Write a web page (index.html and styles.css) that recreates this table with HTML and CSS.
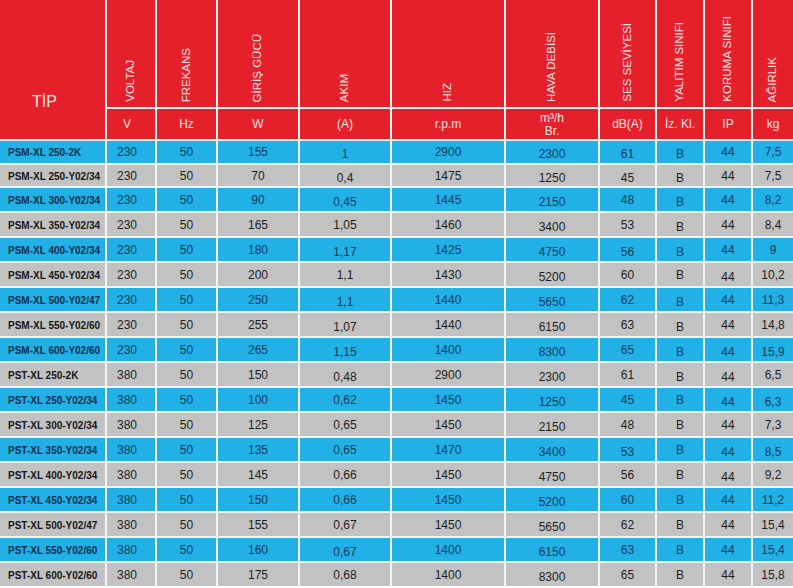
FILE: index.html
```html
<!DOCTYPE html>
<html lang="tr">
<head>
<meta charset="utf-8">
<title>PSM-XL / PST-XL</title>
<link rel="stylesheet" href="styles.css">
</head>
<body>
<div class="table">
  <div class="h tip">TİP</div>
  <div class="h v"><span>VOLTAJ</span></div>
  <div class="h v"><span>FREKANS</span></div>
  <div class="h v"><span>GİRİŞ GÜCÜ</span></div>
  <div class="h v"><span>AKIM</span></div>
  <div class="h v"><span>HIZ</span></div>
  <div class="h v"><span>HAVA DEBİSİ</span></div>
  <div class="h v"><span>SES SEVİYESİ</span></div>
  <div class="h v"><span>YALITIM SINIFI</span></div>
  <div class="h v"><span>KORUMA SINIFI</span></div>
  <div class="h v"><span>AĞIRLIK</span></div>

  <div class="h u volt">V</div>
  <div class="h u">Hz</div>
  <div class="h u">W</div>
  <div class="h u">(A)</div>
  <div class="h u">r.p.m</div>
  <div class="h u two">m³/h<br>Br.</div>
  <div class="h u">dB(A)</div>
  <div class="h u">İz. Kl.</div>
  <div class="h u">IP</div>
  <div class="h u">kg</div>

  <div class="row blue"><div class="name">PSM-XL 250-2K</div><div class="volt">230</div><div>50</div><div>155</div><div class="low">1</div><div>2900</div><div class="low">2300</div><div class="low">61</div><div class="low">B</div><div>44</div><div>7,5</div></div>
  <div class="row gray"><div class="name">PSM-XL 250-Y02/34</div><div class="volt">230</div><div>50</div><div>70</div><div class="low">0,4</div><div>1475</div><div class="low">1250</div><div class="low">45</div><div class="low">B</div><div>44</div><div>7,5</div></div>
  <div class="row blue"><div class="name">PSM-XL 300-Y02/34</div><div class="volt">230</div><div>50</div><div>90</div><div class="low">0,45</div><div>1445</div><div class="low">2150</div><div>48</div><div class="low">B</div><div>44</div><div>8,2</div></div>
  <div class="row gray"><div class="name">PSM-XL 350-Y02/34</div><div class="volt">230</div><div>50</div><div>165</div><div>1,05</div><div>1460</div><div class="low">3400</div><div>53</div><div class="low">B</div><div>44</div><div>8,4</div></div>
  <div class="row blue"><div class="name">PSM-XL 400-Y02/34</div><div class="volt">230</div><div>50</div><div>180</div><div class="low">1,17</div><div>1425</div><div class="low">4750</div><div class="low">56</div><div class="low">B</div><div>44</div><div>9</div></div>
  <div class="row gray"><div class="name">PSM-XL 450-Y02/34</div><div class="volt">230</div><div>50</div><div>200</div><div>1,1</div><div>1430</div><div class="low">5200</div><div>60</div><div>B</div><div class="low">44</div><div>10,2</div></div>
  <div class="row blue"><div class="name">PSM-XL 500-Y02/47</div><div class="volt">230</div><div>50</div><div>250</div><div class="low">1,1</div><div>1440</div><div class="low">5650</div><div>62</div><div class="low">B</div><div>44</div><div>11,3</div></div>
  <div class="row gray"><div class="name">PSM-XL 550-Y02/60</div><div class="volt">230</div><div>50</div><div>255</div><div class="low">1,07</div><div>1440</div><div class="low">6150</div><div>63</div><div class="low">B</div><div>44</div><div>14,8</div></div>
  <div class="row blue"><div class="name">PSM-XL 600-Y02/60</div><div class="volt">230</div><div>50</div><div>265</div><div class="low">1,15</div><div>1400</div><div class="low">8300</div><div>65</div><div class="low">B</div><div class="low">44</div><div class="low">15,9</div></div>
  <div class="row gray"><div class="name">PST-XL 250-2K</div><div class="volt">380</div><div>50</div><div>150</div><div class="low">0,48</div><div>2900</div><div class="low">2300</div><div>61</div><div class="low">B</div><div class="low">44</div><div>6,5</div></div>
  <div class="row blue"><div class="name">PST-XL 250-Y02/34</div><div class="volt">380</div><div>50</div><div>100</div><div>0,62</div><div>1450</div><div class="low">1250</div><div>45</div><div>B</div><div class="low">44</div><div class="low">6,3</div></div>
  <div class="row gray"><div class="name">PST-XL 300-Y02/34</div><div class="volt">380</div><div>50</div><div>125</div><div>0,65</div><div>1450</div><div class="low">2150</div><div>48</div><div>B</div><div>44</div><div>7,3</div></div>
  <div class="row blue"><div class="name">PST-XL 350-Y02/34</div><div class="volt">380</div><div>50</div><div>135</div><div>0,65</div><div>1470</div><div class="low">3400</div><div class="low">53</div><div>B</div><div class="low">44</div><div class="low">8,5</div></div>
  <div class="row gray"><div class="name">PST-XL 400-Y02/34</div><div class="volt">380</div><div>50</div><div>145</div><div>0,66</div><div>1450</div><div class="low">4750</div><div>56</div><div>B</div><div class="low">44</div><div>9,2</div></div>
  <div class="row blue"><div class="name">PST-XL 450-Y02/34</div><div class="volt">380</div><div>50</div><div>150</div><div>0,66</div><div>1450</div><div class="low">5200</div><div>60</div><div>B</div><div>44</div><div>11,2</div></div>
  <div class="row gray"><div class="name">PST-XL 500-Y02/47</div><div class="volt">380</div><div>50</div><div>155</div><div>0,67</div><div>1450</div><div class="low">5650</div><div>62</div><div>B</div><div>44</div><div>15,4</div></div>
  <div class="row blue"><div class="name">PST-XL 550-Y02/60</div><div class="volt">380</div><div>50</div><div>160</div><div class="low">0,67</div><div>1400</div><div class="low">6150</div><div>63</div><div>B</div><div>44</div><div>15,4</div></div>
  <div class="row gray"><div class="name">PST-XL 600-Y02/60</div><div class="volt">380</div><div>50</div><div>175</div><div>0,68</div><div>1400</div><div class="low">8300</div><div>65</div><div>B</div><div>44</div><div>15,8</div></div>
</div>
</body>
</html>
```

FILE: styles.css
```css
html, body {
  margin: 0;
  padding: 0;
  background: #ffffff;
}

body {
  width: 793px;
  height: 588px;
  overflow: hidden;
  font-family: "Liberation Sans", Arial, sans-serif;
}

.table {
  display: grid;
  grid-template-columns: 105px 48px 59px 80px 90px 112px 92px 55px 46px 46px 40px;
  grid-template-rows: 107px 30px 22px 21px repeat(16, 23px);
  column-gap: 2px;
  row-gap: 2px;
  background: #f4f4f4;
  width: 793px;
}

.h {
  background: #e5202a;
  color: #fbe4e4;
}

.tip {
  grid-row: span 2;
  display: flex;
  align-items: flex-end;
  padding: 0 0 28px 32px;
  font-size: 16px;
}

.v {
  display: flex;
  justify-content: center;
  align-items: flex-end;
  padding-bottom: 5px;
  box-sizing: border-box;
}

.v span {
  writing-mode: vertical-rl;
  transform: rotate(180deg);
  font-size: 11.5px;
  line-height: 1;
  white-space: nowrap;
}

.u {
  display: flex;
  align-items: center;
  justify-content: center;
  font-size: 12px;
  text-align: center;
}

.u.two {
  line-height: 13px;
  padding-top: 1px;
}

.row {
  display: contents;
}

.row > div {
  display: flex;
  align-items: center;
  justify-content: center;
  font-size: 12px;
  line-height: 1;
}

.row.blue > div {
  background: #21b1e6;
  color: #123a58;
}

.row.gray > div {
  background: #c2c2c2;
  color: #1e1e1e;
}

.row > .name {
  justify-content: flex-start;
  padding-left: 8px;
  padding-top: 2px;
  font-size: 10px;
  font-weight: bold;
  white-space: nowrap;
}

.row.blue > .name {
  color: #0c2d4c;
}

.row.gray > .name {
  color: #151515;
}

.row > .volt,
.u.volt {
  padding-right: 8px;
}

.row > .low {
  padding-top: 4px;
}
```
